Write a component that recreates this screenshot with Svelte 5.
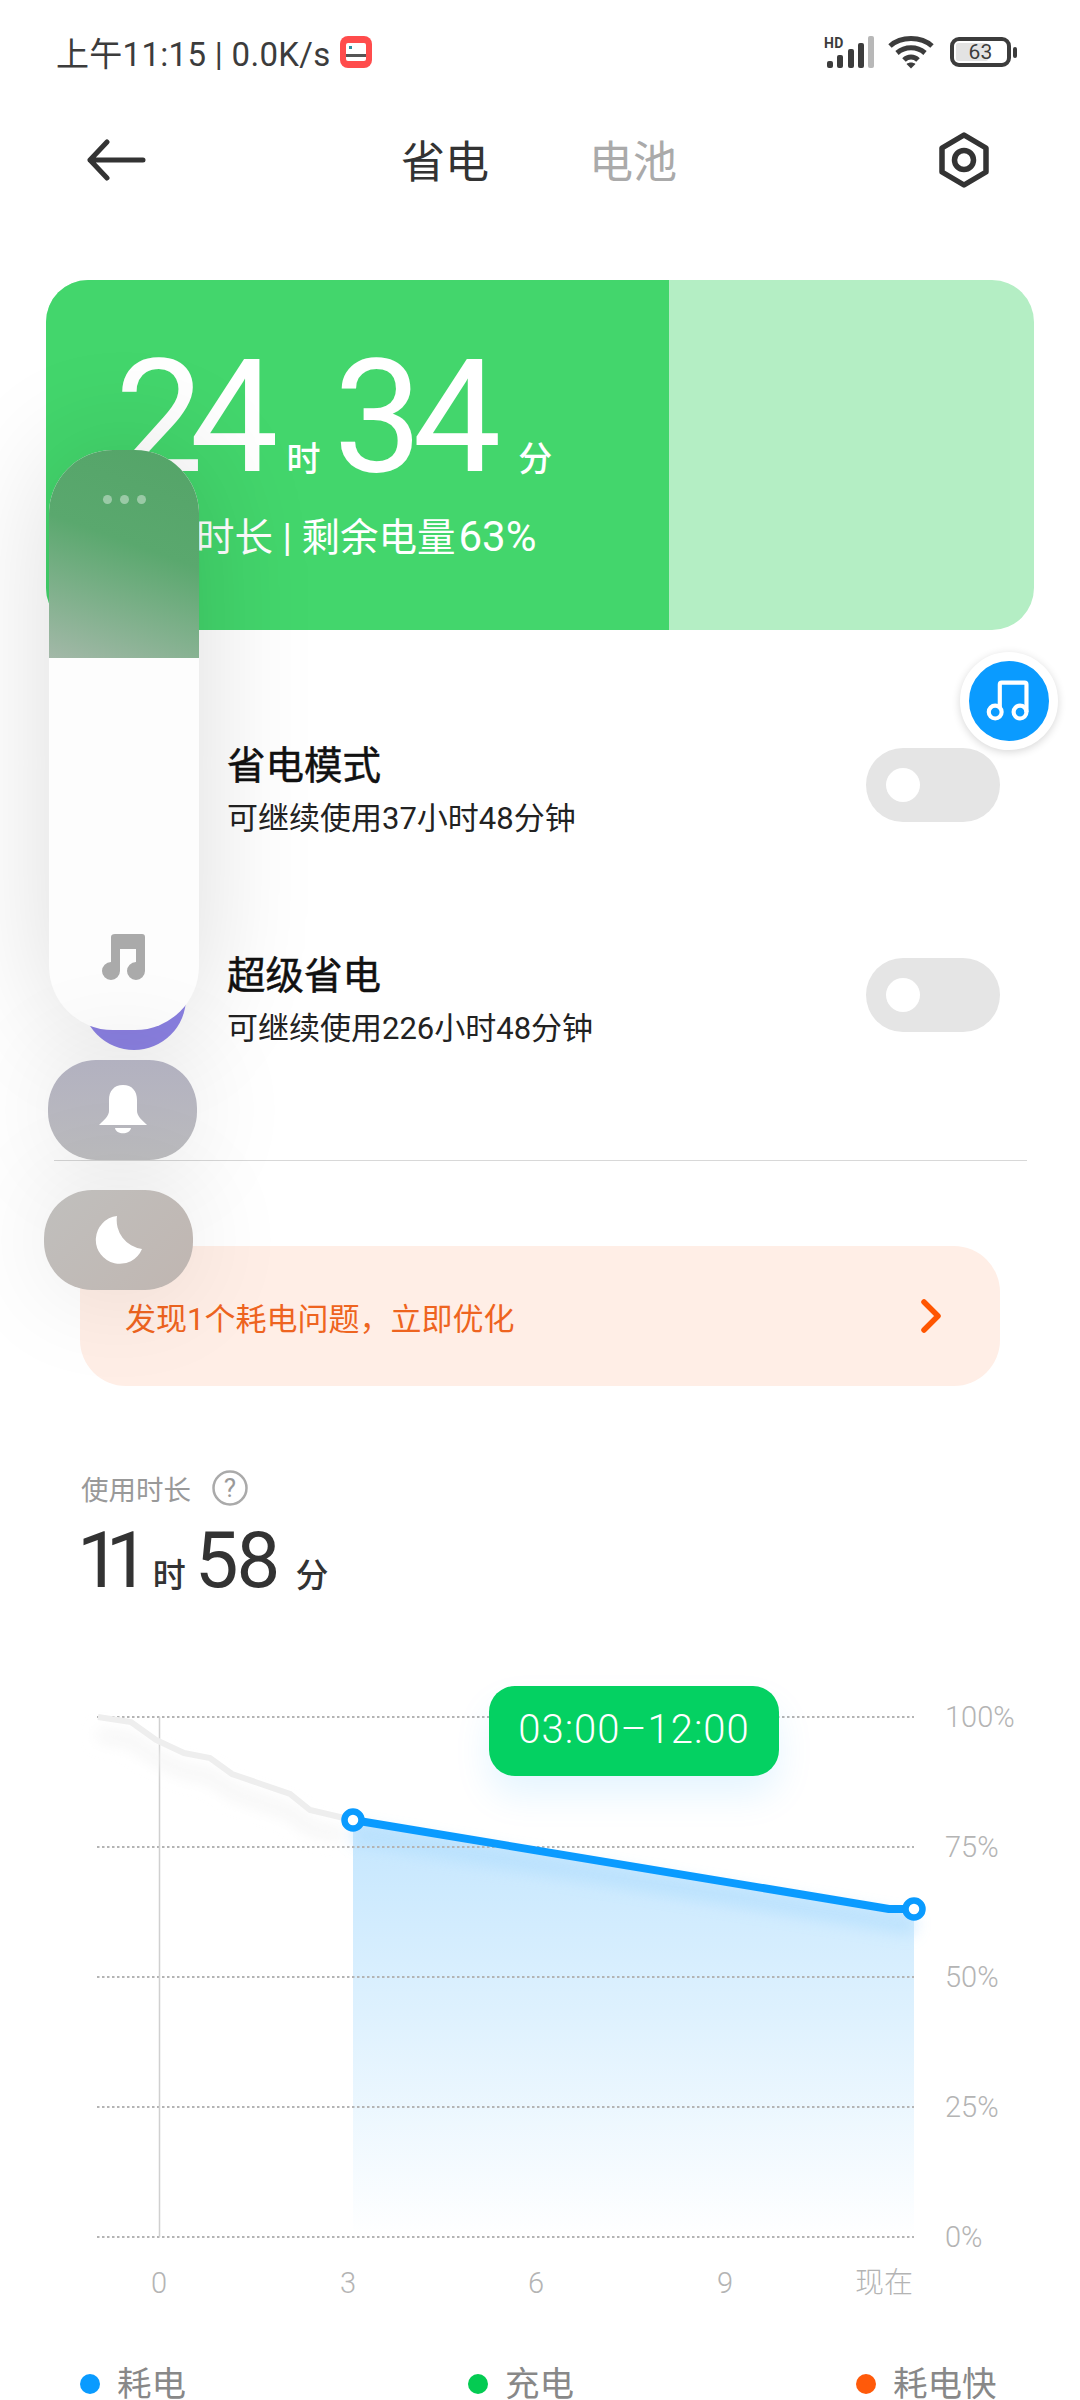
<script>
	const grid = [1717, 1847, 1977, 2107, 2237];
	const pct = ['100%', '75%', '50%', '25%', '0%'];
	const ticks = [
		{ x: 159, t: '0' },
		{ x: 348, t: '3' },
		{ x: 536, t: '6' },
		{ x: 725, t: '9' },
		{ x: 884, t: '现在' }
	];
	const legend = [
		{ c: '#0a9bff', t: '耗电' },
		{ c: '#04cb52', t: '充电' },
		{ c: '#ff5a0a', t: '耗电快' }
	];
	const modes = [
		{ title: '省电模式', sub: '可继续使用37小时48分钟', color: '#43d66c' },
		{ title: '超级省电', sub: '可继续使用226小时48分钟', color: '#8f84e8' }
	];
</script>

<div class="page">
	<header class="status">
		<div class="status-left">
			<span>上午11:15 | 0.0K/s</span>
			<svg class="app-ic" width="32" height="32" viewBox="0 0 32 32">
				<rect width="32" height="32" rx="8" fill="#ff4c4c" />
				<rect x="6" y="7" width="20" height="18" rx="2" fill="#fff" />
				<rect x="6" y="18" width="20" height="3" fill="#555" />
				<rect x="9" y="10" width="3" height="3" fill="#2a8f9f" />
			</svg>
		</div>
		<div class="status-right">
			<svg width="52" height="34" viewBox="0 0 52 34">
				<text class="hd" x="0" y="13">HD</text>
				<rect x="3" y="26" width="6" height="7" rx="2" fill="#3c3c3c" />
				<rect x="13" y="20" width="6" height="13" rx="2" fill="#3c3c3c" />
				<rect x="24" y="14" width="6" height="19" rx="2" fill="#3c3c3c" />
				<rect x="34" y="8" width="6" height="25" rx="2" fill="#3c3c3c" />
				<rect x="44" y="1" width="6" height="32" rx="2" fill="#b8b8b8" />
			</svg>
			<svg width="46" height="34" viewBox="0 0 46 34" fill="none" stroke="#3c3c3c" stroke-width="5">
				<path d="M2 11 C13 1 33 1 44 11" />
				<path d="M9 18 C17 11 29 11 37 18" />
				<path d="M16 25 C20 21 26 21 30 25" />
				<path d="M23 33.500 L18.500 29 C21 27 25 27 27.500 29 Z" fill="#3c3c3c" stroke="none" />
			</svg>
			<div class="battery">
				<div class="battery-body">
					<div class="battery-fill"></div>
					<span>63</span>
				</div>
				<div class="battery-nub"></div>
			</div>
		</div>
	</header>

	<nav class="nav">
		<svg width="60" height="42" viewBox="0 0 60 42" fill="none" stroke="#333" stroke-width="5" stroke-linecap="round" stroke-linejoin="round">
			<path d="M4 21 H57 M21 3 L4 21 L21 39" />
		</svg>
		<div class="tabs">
			<span class="on">省电</span>
			<span class="off">电池</span>
		</div>
		<svg class="gear" width="52" height="56" viewBox="0 0 52 56" fill="none" stroke="#333" stroke-width="5.500" stroke-linejoin="round">
			<path d="M26 3 L48 16 V40 L26 53 L4 40 V16 Z" />
			<circle cx="26" cy="28" r="9.500" />
		</svg>
	</nav>

	<section class="hero">
		<div class="hero-fill">
			<div class="hero-time">
				<b>24</b><i>时</i><b>34</b><i>分</i>
			</div>
			<div class="hero-sub">使用时长 | 剩余电量<span>63%</span></div>
		</div>
	</section>

	<section class="modes">
		{#each modes as m}
			<div class="mode">
				<div class="mode-ic" style="background:{m.color}"></div>
				<div class="mode-text">
					<div class="mode-title">{m.title}</div>
					<div class="mode-sub">{m.sub}</div>
				</div>
				<div class="toggle"><div class="knob"></div></div>
			</div>
		{/each}
	</section>

	<hr class="divider" />

	<div class="issue">
		<span>发现1个耗电问题，立即优化</span>
		<svg width="24" height="34" viewBox="0 0 24 34" fill="none" stroke="#ff5500" stroke-width="5.500" stroke-linecap="round" stroke-linejoin="round">
			<path d="M4 3 L18 17 L4 31" />
		</svg>
	</div>

	<section class="usage">
		<div class="usage-label">
			<span>使用时长</span>
			<svg width="36" height="36" viewBox="0 0 36 36">
				<circle cx="18" cy="18" r="16.500" fill="none" stroke="#aaa" stroke-width="2.500" />
				<text class="q" x="18" y="27">?</text>
			</svg>
		</div>
		<div class="usage-value">
			<b>11</b><i>时</i><b>58</b><i>分</i>
		</div>
	</section>

	<section class="chart">
		<svg width="1080" height="630" viewBox="0 1680 1080 630">
			<defs>
				<linearGradient id="area" x1="0" y1="0" x2="0" y2="1">
					<stop offset="0" stop-color="#c4e6fe" />
					<stop offset="0.5" stop-color="#e0f2fe" />
					<stop offset="1" stop-color="#ffffff" />
				</linearGradient>
				<filter id="soft" x="-10%" y="-50%" width="120%" height="250%">
					<feGaussianBlur stdDeviation="8" />
				</filter>
			</defs>
			<path d="M353 1820 L889 1909 L914 1909 V2237 H353 Z" fill="url(#area)" />
			<path d="M353 1834 L914 1926" stroke="#b4dffd" stroke-width="16" fill="none" filter="url(#soft)" opacity="0.8" />
			{#each grid as y}
				<line x1="97" x2="914" y1={y} y2={y} stroke="#b4b4b4" stroke-width="2" stroke-dasharray="2.500 2.500" />
			{/each}
			<line x1="159.500" x2="159.500" y1="1717" y2="2237" stroke="#d0d0d0" stroke-width="1.500" />
			<path d="M98 1735 L131 1740 L156 1758 L184 1771 L210 1776 L232 1792 L290 1812 L310 1828 L344 1836" fill="none" stroke="#f3f3f3" stroke-width="10" filter="url(#soft)" />
			<path d="M98 1717 L131 1722 L156 1740 L184 1753 L210 1758 L232 1774 L290 1794 L310 1810 L344 1818" fill="none" stroke="#eeeeee" stroke-width="6" />
			<path d="M353 1820 L889 1909 L914 1909" fill="none" stroke="#0a9bff" stroke-width="8" stroke-linejoin="round" />
			<circle cx="353" cy="1820" r="8.500" fill="#fff" stroke="#0a9bff" stroke-width="6.500" />
			<circle cx="914" cy="1909" r="8.500" fill="#fff" stroke="#0a9bff" stroke-width="6.500" />
			{#each grid as y, i}
				<text class="axis" x="945" y={y + 10}>{pct[i]}</text>
			{/each}
			{#each ticks as tick}
				<text class="axis mid" x={tick.x} y="2293">{tick.t}</text>
			{/each}
		</svg>
		<div class="range">03:00–12:00</div>
	</section>

	<div class="legend">
		{#each legend as l}
			<div class="legend-item">
				<span class="dot" style="background:{l.c}"></span>
				<span>{l.t}</span>
			</div>
		{/each}
	</div>

	<div class="float-music">
		<svg width="46" height="46" viewBox="0 0 50 50" fill="none" stroke="#fff" stroke-width="4.500" stroke-linejoin="round">
			<circle cx="10" cy="37" r="7" />
			<circle cx="37" cy="37" r="7" />
			<path d="M15 32 V7 Q15 5 17 5 H42 Q44 5 44 7 V37" />
		</svg>
	</div>

	<aside class="dock">
		<div class="panel">
			<div class="frost">
				<span></span><span></span><span></span>
			</div>
			<div class="panel-body">
				<svg width="44" height="46" viewBox="0 0 44 46" fill="#aaa">
					<path d="M14 0 H41 Q44 0 44 3 V37 A9 9 0 1 1 35 28 V15 H19 V37 A9 9 0 1 1 10 28 V3 Q10 0 14 0 Z" />
				</svg>
			</div>
		</div>
		<div class="pill bell">
			<svg width="48" height="50" viewBox="0 0 48 50" fill="#fff">
				<path d="M24 0 C15 0 10 6 10 15 V26 C10 31 5 35 1 39 L0 40 H48 L47 39 C43 35 38 31 38 26 V15 C38 6 33 0 24 0 Z" />
				<path d="M16 43 H32 C31 50 17 50 16 43 Z" />
			</svg>
		</div>
		<div class="pill moon">
			<svg width="48" height="50" viewBox="0 0 48 50" fill="#fff">
				<path d="M22 1 A24 24 0 1 0 47 34 A29 29 0 0 1 22 1 Z" />
			</svg>
		</div>
	</aside>
</div>

<style>
	:global(body) {
		background: #fff;
	}

	.page {
		position: relative;
		width: 1080px;
		height: 2400px;
		overflow: hidden;
		background: #fff;
		font-family: Roboto, 'Noto Sans CJK SC', sans-serif;
		color: #333;
	}

	i {
		font-style: normal;
	}

	b {
		font-weight: 400;
	}

	.status {
		height: 104px;
		padding: 0 63px 0 56px;
		display: flex;
		align-items: center;
		justify-content: space-between;
		font-size: 33px;
		letter-spacing: 0.3px;
		color: #3c3c3c;
	}

	.status-left,
	.status-right {
		display: flex;
		align-items: center;
	}

	.status-left {
		gap: 9px;
	}

	.status-right {
		gap: 12px;
	}

	.hd {
		font-size: 14px;
		font-weight: 700;
		fill: #3c3c3c;
	}

	.battery {
		display: flex;
		align-items: center;
		gap: 2px;
		margin-left: 4px;
	}

	.battery-body {
		position: relative;
		width: 61px;
		height: 30px;
		box-sizing: border-box;
		border: 4px solid #3c3c3c;
		border-radius: 9px;
		display: flex;
		align-items: center;
		justify-content: center;
		font-size: 21px;
		overflow: hidden;
	}

	.battery-fill {
		position: absolute;
		left: 2px;
		top: 2px;
		bottom: 2px;
		width: 32px;
		background: #e3e3e3;
		border-radius: 2px;
	}

	.battery-body span {
		position: relative;
	}

	.battery-nub {
		width: 4px;
		height: 11px;
		border-radius: 2px;
		background: #3c3c3c;
	}

	.nav {
		height: 110px;
		padding: 0 90px 0 86px;
		display: flex;
		align-items: center;
		justify-content: space-between;
	}

	.nav svg {
		margin-top: 2px;
	}

	.tabs {
		display: flex;
		gap: 100px;
		margin-right: 6px;
		font-size: 44px;
	}

	.off {
		color: #aaa;
	}

	.hero {
		margin: 66px 46px 0 46px;
		height: 350px;
		border-radius: 42px;
		overflow: hidden;
		background: #b4eec4;
	}

	.hero-fill {
		width: 623px;
		height: 100%;
		box-sizing: border-box;
		padding: 62px 0 0 69px;
		background: #43d66c;
		color: #fff;
	}

	.hero-time {
		display: flex;
		align-items: baseline;
		height: 150px;
		line-height: 150px;
	}

	.hero-time b {
		font-size: 158px;
		letter-spacing: -10px;
	}

	.hero-time b:first-child {
		letter-spacing: -14px;
	}

	.hero-time i {
		font-size: 34px;
		font-weight: 500;
		margin: 0 13px 0 22px;
	}

	.hero-time i:last-child {
		margin-left: 27px;
	}

	.hero-sub {
		margin: 20px 0 0 4px;
		font-size: 38.500px;
		line-height: 50px;
	}

	.hero-sub span {
		margin-left: 3px;
		font-size: 42px;
	}

	.modes {
		margin-top: 50px;
	}

	.mode {
		height: 210px;
		padding: 0 80px 0 82px;
		display: flex;
		align-items: center;
	}

	.mode-ic {
		width: 104px;
		height: 104px;
		border-radius: 50%;
		margin: 6px 41px 0 0;
	}

	.mode-text {
		flex: 1;
		padding-top: 9px;
	}

	.mode-title {
		font-size: 38.500px;
		line-height: 50px;
		color: #111;
		-webkit-text-stroke: 0.5px #111;
	}

	.mode-sub {
		margin-top: 8px;
		font-size: 31px;
		line-height: 40px;
		color: #222;
	}

	.toggle {
		width: 134px;
		height: 74px;
		border-radius: 37px;
		background: #e5e5e5;
		display: flex;
		align-items: center;
		padding-left: 20px;
		box-sizing: border-box;
	}

	.knob {
		width: 34px;
		height: 34px;
		border-radius: 50%;
		background: #fff;
	}

	.divider {
		margin: 60px 53px 0 54px;
		border: 0;
		height: 1px;
		background: #d8d8d8;
	}

	.issue {
		margin: 85px 80px 0;
		height: 140px;
		padding: 0 56px 0 45px;
		border-radius: 46px;
		background: #ffeee6;
		color: #ee6420;
		font-size: 31px;
		display: flex;
		align-items: center;
		justify-content: space-between;
	}

	.usage {
		margin: 84px 0 0 81px;
	}

	.usage-label {
		display: flex;
		align-items: center;
		gap: 21px;
		height: 36px;
		font-size: 27.500px;
		color: #999;
	}

	.q {
		font-size: 26px;
		fill: #999;
		text-anchor: middle;
	}

	.usage-value {
		display: flex;
		align-items: baseline;
		height: 78px;
		line-height: 78px;
		margin-top: 16px;
	}

	.usage-value b {
		font-size: 78px;
		letter-spacing: -2px;
	}

	.usage-value b:first-child {
		letter-spacing: -15px;
		margin-left: -4px;
	}

	.usage-value i {
		font-size: 33px;
		font-weight: 500;
		margin: 0 9px 0 18px;
	}

	.usage-value i:last-child {
		margin-left: 17px;
	}

	.chart {
		position: absolute;
		left: 0;
		top: 1680px;
		width: 1080px;
		height: 630px;
	}

	.axis {
		font-size: 29px;
		font-weight: 300;
		fill: #b4b4b4;
	}

	.mid {
		text-anchor: middle;
	}

	.range {
		position: absolute;
		left: 489px;
		top: 6px;
		width: 290px;
		height: 90px;
		border-radius: 26px;
		background: #04d162;
		color: #fff;
		font-size: 40px;
		font-weight: 300;
		letter-spacing: 1px;
		line-height: 88px;
		text-align: center;
		box-shadow: 0 20px 36px rgba(10, 155, 255, 0.1);
	}

	.legend {
		position: absolute;
		left: 80px;
		top: 2360px;
		display: grid;
		grid-template-columns: repeat(3, 388px);
		font-size: 34.500px;
		line-height: 48px;
		color: #888;
	}

	.legend-item {
		display: flex;
		align-items: center;
		gap: 17px;
	}

	.dot {
		width: 20px;
		height: 20px;
		border-radius: 50%;
	}

	.float-music {
		position: absolute;
		left: 960px;
		top: 652px;
		width: 80px;
		height: 80px;
		border-radius: 50%;
		background: #0a9bff;
		border: 9px solid #fff;
		box-shadow: 0 2px 8px rgba(0, 0, 0, 0.16);
		display: flex;
		align-items: center;
		justify-content: center;
	}

	.dock {
		position: absolute;
		left: 44px;
		top: 450px;
		width: 156px;
	}

	.panel {
		margin-left: 5px;
		width: 150px;
		height: 580px;
		border-radius: 64px;
		overflow: hidden;
		background: #fdfdfd;
		box-shadow: 0 0 120px rgba(0, 0, 0, 0.14);
		display: flex;
		flex-direction: column;
	}

	.frost {
		height: 208px;
		padding-top: 45px;
		box-sizing: border-box;
		background: linear-gradient(200deg, #54a468 0%, #5aa86e 45%, #a3b8a8 100%);
		display: flex;
		justify-content: center;
		gap: 8px;
	}

	.frost span {
		width: 9px;
		height: 9px;
		border-radius: 50%;
		background: rgba(255, 255, 255, 0.4);
	}

	.panel-body {
		flex: 1;
		display: flex;
		align-items: flex-end;
		justify-content: center;
		padding: 0 3px 50px 0;
	}

	.pill {
		width: 149px;
		height: 100px;
		border-radius: 48px;
		display: flex;
		align-items: center;
		justify-content: center;
		box-shadow: 0 0 110px rgba(0, 0, 0, 0.1);
	}

	.bell {
		margin: 30px 0 0 4px;
		background: linear-gradient(180deg, #b2b1c0, #bcbcbe);
	}

	.moon {
		margin-top: 30px;
		background: linear-gradient(135deg, #c0bfbd, #c0b6b1);
	}
</style>
